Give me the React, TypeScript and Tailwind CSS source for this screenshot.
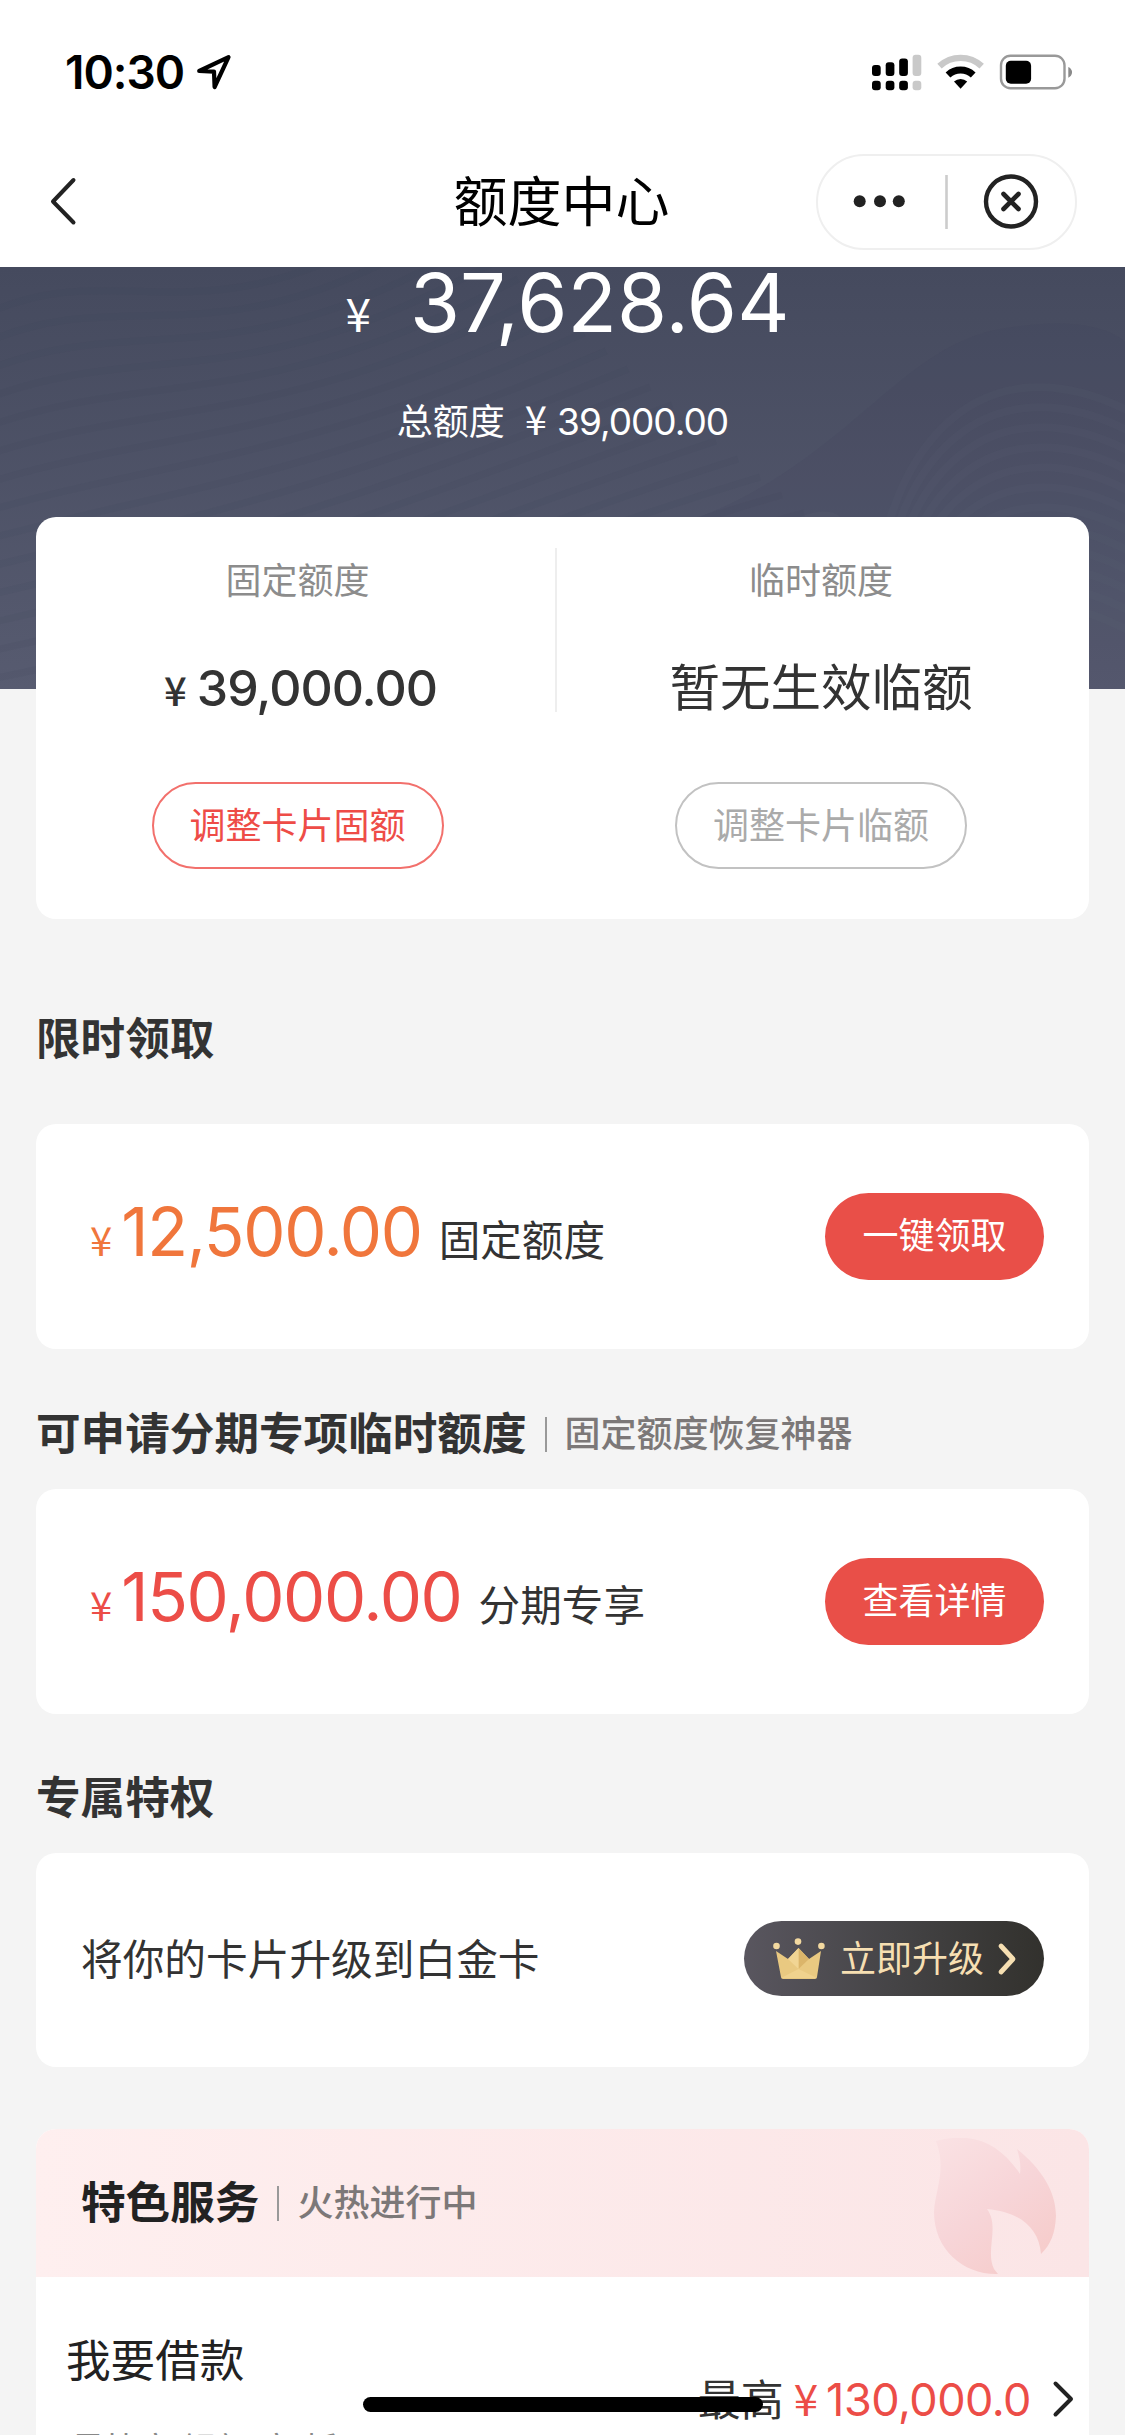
import type { ReactNode } from 'react';

const waves = Array.from({ length: 22 }, (_, i) => i);

function StatusBar() {
  return (
    <div className="flex h-[143px] items-center justify-between pl-[65px] pr-[53px]">
      <div className="flex items-center gap-[12px]">
        <span className="text-[46px] leading-[46px] font-semibold tracking-[-1px] text-black">10:30</span>
        <svg width="36" height="36" viewBox="0 0 36 36" fill="none" stroke="#000" strokeWidth="4.2" strokeLinejoin="round">
          <path d="M3.2 17 32.5 3.2 18.6 33 18 17.6Z" />
        </svg>
      </div>
      <div className="flex items-center">
        <svg width="200" height="40" viewBox="872 51 200 40">
          <g fill="#000">
            <rect x="872" y="64" width="8.7" height="11" rx="3" />
            <rect x="885.7" y="61.3" width="8.7" height="13.7" rx="3" />
            <rect x="899.2" y="57.5" width="8.7" height="17.5" rx="3" />
            <rect x="872" y="79.8" width="8.7" height="9.5" rx="3" />
            <rect x="885.7" y="79.8" width="8.7" height="9.5" rx="3" />
            <rect x="899.2" y="79.8" width="8.7" height="9.5" rx="3" />
          </g>
          <g fill="#c9c9c9">
            <rect x="912.6" y="53.7" width="8.7" height="21.3" rx="3" />
            <rect x="912.6" y="79.8" width="8.7" height="9.5" rx="3" />
          </g>
          <path d="M939.5 65.2a31 31 0 0 1 42.2 0" fill="none" stroke="#c9c9c9" strokeWidth="6.4" />
          <path d="M948 74a18.6 18.6 0 0 1 25.2 0" fill="none" stroke="#000" strokeWidth="7" />
          <path d="M954 80.6a9.6 9.6 0 0 1 13.2 0L960.6 87.7Z" fill="#000" />
          <rect x="1001" y="54.7" width="63.5" height="32.6" rx="9.5" fill="none" stroke="#999" strokeWidth="2.4" />
          <rect x="1005.8" y="59.8" width="25.3" height="23" rx="5" fill="#000" />
          <path d="M1068.3 66c5 2.2 5 8.5 0 10.7Z" fill="#8a8a8a" />
        </svg>
      </div>
    </div>
  );
}

function NavBar() {
  return (
    <div className="grid h-[124px] grid-cols-[1fr_auto_1fr] items-start pl-[46px] pr-12">
      <svg className="mt-8 ml-[3px]" width="30" height="52" viewBox="0 0 30 52" fill="none" stroke="#222" strokeWidth="4" strokeLinecap="round" strokeLinejoin="round">
        <path d="M24.5 5 4 26.5 24.5 47.5" />
      </svg>
      <h1 className="mt-5 text-[54px] leading-[80px] text-black">额度中心</h1>
      <div className="mt-[11px] flex h-[96px] w-[261px] items-center justify-self-end rounded-full border-2 border-[#efefef]">
        <svg width="257" height="92" viewBox="818 155 257 92">
          <g fill="#222">
            <circle cx="859.7" cy="200.3" r="6" />
            <circle cx="880" cy="200.3" r="6" />
            <circle cx="898.8" cy="200.3" r="6" />
          </g>
          <path d="M946.5 174v54" stroke="#ccc" strokeWidth="2.6" />
          <circle cx="1011" cy="200.5" r="25" fill="none" stroke="#222" strokeWidth="4.4" />
          <path d="m1003.5 193 15 15m0-15-15 15" stroke="#222" strokeWidth="4.6" strokeLinecap="round" />
        </svg>
      </div>
    </div>
  );
}

function WaveBackdrop() {
  return (
    <svg className="absolute inset-0" width="1125" height="422" viewBox="0 0 1125 422" fill="none">
      <g stroke="#3d4256" strokeOpacity=".1" strokeWidth="7">
        {waves.map((i) => (
          <path key={i} d={`M-20 ${50 + i * 28}C${120 + i * 8} ${-20 + i * 30} ${200 + i * 14} ${90 + i * 15} ${430 + i * 22} ${-60 + i * 18}`} />
        ))}
      </g>
      <path d="M700 250C850 190 900 80 1000 62S1125 75 1125 75V422H860C840 320 880 220 800 250Z" fill="#3d3f54" fillOpacity=".1" />
      <g stroke="#6a7084" strokeOpacity=".08" strokeWidth="8">
        {waves.slice(0, 12).map((i) => (
          <path key={i} d={`M${872 + i * 6} 422C${860 + i * 8} ${180 + i * 16} ${980 + i * 4} ${60 + i * 22} 1140 ${150 + i * 20}`} />
        ))}
      </g>
    </svg>
  );
}

function LimitColumn({ label, value, button, active }: { label: string; value: ReactNode; button: string; active?: boolean }) {
  return (
    <div className={active ? 'flex flex-col items-center pl-1' : 'flex flex-col items-center pr-1'}>
      <div className="mt-[38px] text-[36px] leading-[52px] text-[#8c8c8c]">{label}</div>
      <div className="mt-[41px] flex h-20 items-center text-[#333]">{value}</div>
      <button
        className={
          active
            ? 'mt-[54px] h-[87px] w-[292px] rounded-full border-2 border-[#f2706c] text-[36px] text-[#ee4c47]'
            : 'mt-[54px] h-[87px] w-[292px] rounded-full border-2 border-[#c2c2c2] text-[36px] text-[#aaa]'
        }
      >
        {button}
      </button>
    </div>
  );
}

function SectionTitle({ title, sub }: { title: string; sub?: string }) {
  return (
    <div className="flex items-center">
      <h2 className="text-[44.6px] leading-[60px] font-bold">{title}</h2>
      {sub && <span className="ml-[18px] h-[35px] w-0.5 bg-[#999]" />}
      {sub && <span className="ml-[18px] text-[36px] leading-[60px] font-medium text-[#7c7878]">{sub}</span>}
    </div>
  );
}

function OfferCard({ amount, label, button, tone }: { amount: string; label: string; button: string; tone: string }) {
  return (
    <div className="flex h-[225px] items-center justify-between rounded-[20px] bg-white pl-[54px] pr-[45px]">
      <div className="flex items-baseline">
        <span className={`font-['Noto_Sans_CJK_SC'] text-[40px] leading-[80px] ${tone}`}>¥</span>
        <span className={`ml-[9px] text-[67px] leading-[80px] tracking-[-1.3px] ${tone}`}>{amount}</span>
        <span className="ml-[17px] text-[41.6px] leading-[80px] text-[#333]">{label}</span>
      </div>
      <button className="mb-px h-[87px] w-[219px] rounded-full bg-[#e94f48] text-[36px] text-white">{button}</button>
    </div>
  );
}

function Crown() {
  return (
    <svg width="52" height="42" viewBox="0 0 52 42">
      <path d="M3 13 15 21 25.5 10 36 21 48 13 44 39Q43.8 41 42 41H10Q8.2 41 8 39Z" fill="#e9c981" />
      <path d="M25.5 10 36 21 25.5 31Z" fill="#dbb56a" />
      <path d="M25.5 10 15 21 25.5 31Z" fill="#f1d594" />
      <path d="M8 40 25.5 31 44 40Z" fill="#f0d28e" />
      <g fill="#f3d9a0">
        <circle cx="3.5" cy="8" r="3.3" />
        <circle cx="25" cy="3.6" r="3.3" />
        <circle cx="48.4" cy="8" r="3.3" />
      </g>
    </svg>
  );
}

function Flame() {
  return (
    <svg className="absolute top-[9px] right-[33px]" width="122" height="138" viewBox="0 0 122 138">
      <defs>
        <linearGradient id="flame" x1="0" y1="0" x2=".7" y2="1">
          <stop offset="0" stopColor="#fae2e4" />
          <stop offset=".55" stopColor="#f7d5d8" />
          <stop offset="1" stopColor="#f6cccb" />
        </linearGradient>
      </defs>
      <path
        d="M2 3C40-7 66 6 86 36 87 28 86 20 83 11 108 31 122 54 122 78 121 96 117 106 107 116 105 90 86 74 53 71 66 89 51 112 60 131L64 136C30 137 0 112 0 74 1 52 13 32 2 3Z"
        fill="url(#flame)"
      />
    </svg>
  );
}

export default function App() {
  return (
    <div className="relative h-[2435px] w-[1125px] overflow-hidden bg-[#f4f4f4] font-['Inter','Noto_Sans_CJK_SC',sans-serif] text-[#333]">
      <header className="bg-white">
        <StatusBar />
        <NavBar />
      </header>

      <section className="relative h-[422px] bg-linear-to-b from-[#454a5e] to-[#575b70] text-white">
        <WaveBackdrop />
        <div className="relative flex flex-col items-center">
          <div className="flex items-baseline pt-px pl-[10px]">
            <span className="font-['Noto_Sans_CJK_SC'] text-[46px] leading-[70px]">¥</span>
            <span className="ml-[39px] text-[81px] leading-[70px] tracking-[0.1px]">37,628.64</span>
          </div>
          <div className="mt-[43px] flex items-baseline text-[36px] leading-[56px]">
            <span>总额度</span>
            <span className="ml-[20px] font-['Noto_Sans_CJK_SC'] text-[40px]">¥</span>
            <span className="ml-[10px] text-[37px] tracking-[-1px]">39,000.00</span>
          </div>
        </div>
      </section>

      <main className="relative -mt-[172px] px-9">
        <div className="grid h-[402px] grid-cols-[519px_2px_532px] rounded-[20px] bg-white">
          <LimitColumn
            active
            label="固定额度"
            button="调整卡片固额"
            value={
              <div className="flex items-baseline pl-[6px] font-medium">
                <span className="font-['Noto_Sans_CJK_SC'] text-[40px] leading-[80px]">¥</span>
                <span className="ml-[10px] text-[50px] leading-[80px] tracking-[-1px]">39,000.00</span>
              </div>
            }
          />
          <div className="mt-[31px] h-[164px] bg-[#eee]" />
          <LimitColumn label="临时额度" button="调整卡片临额" value={<span className="text-[50.5px] leading-[80px]">暂无生效临额</span>} />
        </div>

        <div className="mt-[90px]">
          <SectionTitle title="限时领取" />
        </div>
        <div className="mt-[55px]">
          <OfferCard amount="12,500.00" label="固定额度" button="一键领取" tone="text-[#f0763c]" />
        </div>

        <div className="mt-[55px]">
          <SectionTitle title="可申请分期专项临时额度" sub="固定额度恢复神器" />
        </div>
        <div className="mt-[25px]">
          <OfferCard amount="150,000.00" label="分期专享" button="查看详情" tone="text-[#ec4d47]" />
        </div>

        <div className="mt-[54px]">
          <SectionTitle title="专属特权" />
        </div>
        <div className="mt-[25px] flex h-[214px] items-center justify-between rounded-[20px] bg-white pl-[45px] pr-[45px]">
          <span className="text-[41.7px]">将你的卡片升级到白金卡</span>
          <button className="mb-[3px] flex h-[75px] w-[300px] items-center rounded-full bg-linear-to-r from-[#59565f] via-[#454446] to-[#32312d] pl-[29px] text-[36px] text-[#f6dfb2]">
            <Crown />
            <span className="ml-[15px]">立即升级</span>
            <svg className="ml-[13px]" width="20" height="34" viewBox="0 0 20 34" fill="none" stroke="#f6dfb2" strokeWidth="4.8" strokeLinecap="round" strokeLinejoin="round">
              <path d="M4 4 16 17 4 30" />
            </svg>
          </button>
        </div>

        <div className="mt-[62px] h-[306px] overflow-hidden rounded-t-[20px] bg-white">
          <div className="relative flex h-[148px] items-center bg-linear-to-r from-[#feefef] to-[#fbe5e6] pl-[45px] text-[#222]">
            <SectionTitle title="特色服务" sub="火热进行中" />
            <Flame />
          </div>
          <div className="flex justify-between pl-[30px] pr-[14px]">
            <div>
              <div className="mt-[52px] text-[44.6px] leading-[64px] text-[#222]">我要借款</div>
              <div className="mt-[32px] pl-[5px] text-[34px] leading-[50px] text-[#888]">最快享 银额 享 折</div>
            </div>
            <div className="mt-[82px] flex h-20 items-center">
              <div className="flex items-baseline">
                <span className="text-[43px]">最高</span>
                <span className="ml-[10px] font-['Noto_Sans_CJK_SC'] text-[44px] text-[#ec4d47]">¥</span>
                <span className="ml-2 text-[45px] tracking-[-0.5px] text-[#ec4d47]">130,000.0</span>
              </div>
              <svg className="ml-[20px]" width="24" height="40" viewBox="0 0 24 40" fill="none" stroke="#222" strokeWidth="4" strokeLinecap="round" strokeLinejoin="round">
                <path d="M4.5 4.5 20 20 4.5 35.5" />
              </svg>
            </div>
          </div>
        </div>
      </main>

      <div className="absolute top-[2397px] left-[363px] h-[15px] w-[400px] rounded-full bg-black" />
    </div>
  );
}
